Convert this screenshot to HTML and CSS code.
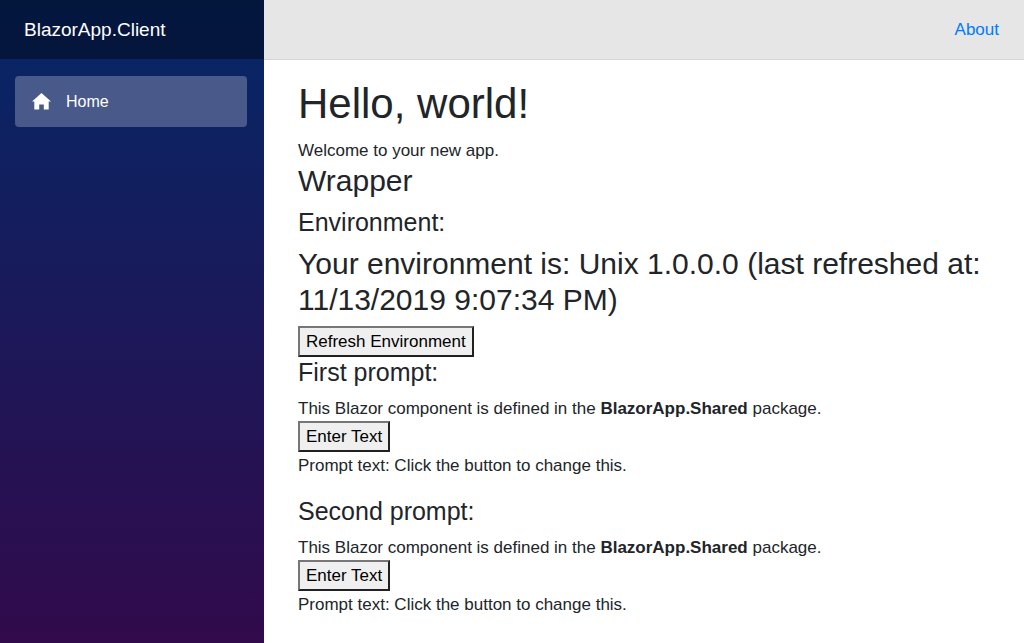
FILE: index.html
```html
<!DOCTYPE html>
<html lang="en">
<head>
<meta charset="utf-8">
<meta name="viewport" content="width=device-width, initial-scale=1">
<title>BlazorApp.Client</title>
<link rel="stylesheet" href="styles.css">
</head>
<body>
<div class="app">
  <aside class="sidebar">
    <div class="brand-row"><a class="brand" href="#">BlazorApp.Client</a></div>
    <nav class="nav">
      <a class="nav-link" href="#">
        <svg class="nav-icon" viewBox="0 0 19 17" aria-hidden="true"><path d="M9.500 0L0 8.500H2.300V16.500H7.200V11.500H11.800V16.500H16.700V8.500H19Z"/></svg>
        <span>Home</span>
      </a>
    </nav>
  </aside>
  <div class="main">
    <header class="top-row"><a class="about" href="#">About</a></header>
    <main class="content">
      <h1>Hello, world!</h1>
      <div>Welcome to your new app.</div>
      <h3>Wrapper</h3>
      <h4>Environment:</h4>
      <h3>Your environment is: Unix 1.0.0.0 (last refreshed at: 11/13/2019 9:07:34 PM)</h3>
      <button class="button" type="button">Refresh Environment</button>
      <section class="prompt">
        <h4>First prompt:</h4>
        <div>This Blazor component is defined in the <strong>BlazorApp.Shared</strong> package.</div>
        <button class="button" type="button">Enter Text</button>
        <div>Prompt text: Click the button to change this.</div>
      </section>
      <section class="prompt">
        <h4>Second prompt:</h4>
        <div>This Blazor component is defined in the <strong>BlazorApp.Shared</strong> package.</div>
        <button class="button" type="button">Enter Text</button>
        <div>Prompt text: Click the button to change this.</div>
      </section>
    </main>
  </div>
</div>
</body>
</html>
```
FILE: styles.css
```css
*, *::before, *::after { box-sizing: border-box; }
body {
  margin: 0;
  background: #fff;
  color: #212529;
  font-family: "Liberation Sans", Arial, sans-serif;
  font-size: 17px;
  line-height: 25px;
}
a { text-decoration: none; }
.app { display: flex; min-height: 100vh; }
.sidebar {
  flex: 0 0 264px;
  background: linear-gradient(180deg, #052767 0%, #310a4b 100%);
}
.brand-row {
  display: flex;
  align-items: center;
  height: 59px;
  padding: 0 24px;
  background: rgba(0, 0, 0, 0.4);
}
.brand { color: #fff; font-size: 19px; }
.nav { padding: 17px 17px 17px 15px; }
.nav-link {
  display: flex;
  align-items: center;
  gap: 15px;
  height: 51px;
  padding: 0 17px;
  border-radius: 4px;
  background: rgba(255, 255, 255, 0.25);
  color: #fff;
  font-size: 16px;
}
.nav-icon { width: 19px; height: 17px; fill: #fff; }
.main { flex: 1; min-width: 0; }
.top-row {
  display: flex;
  align-items: center;
  justify-content: flex-end;
  height: 60px;
  padding: 0 25px;
  background: #e6e6e6;
  border-bottom: 1px solid #d6d5d5;
}
.about { color: #007bff; }
.content { padding: 18px 34px 0; }
h1, h3, h4 { margin: 0 0 8px; font-weight: 400; }
h1 { font-size: 42px; line-height: 52px; }
h3 { font-size: 30px; line-height: 36px; }
h4 { font-size: 25px; line-height: 31px; }
.button {
  display: block;
  padding: 1px 6px;
  border: 2px solid;
  border-color: #767676 #212121 #212121 #767676;
  border-radius: 0;
  background: #efefef;
  color: #000;
  font: inherit;
}
.prompt { margin-bottom: 18px; }
.prompt .button { margin-bottom: 1px; }
```
